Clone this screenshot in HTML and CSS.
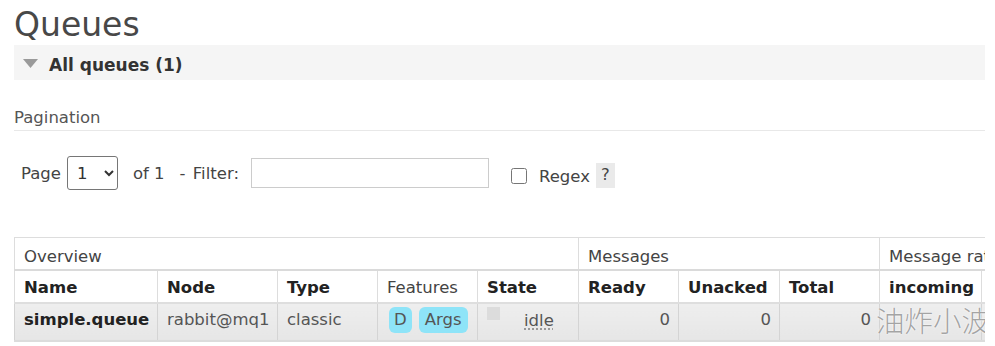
FILE: index.html
```html
<!DOCTYPE html>
<html lang="en">
<head>
    <meta charset="UTF-8">
    <title>Queues</title>
    <link rel="stylesheet" href="styles.css">
</head>
<body>
    <div class="page">
        <h1>Queues</h1>

        <div class="section-head">
            <svg class="toggle" width="15" height="9" viewBox="0 0 15 9"><polygon points="0,0 15,0 7.5,9" fill="#9a9a9a"/></svg><span>All queues (1)</span>
        </div>

        <h3 class="pagination-title">Pagination</h3>

        <div class="pager">
            <span class="lbl">Page</span>
            <select class="page-select">
                <option>1</option>
            </select>
            <span class="lbl of">of 1</span>
            <span class="lbl filter">- Filter:</span>
            <input type="text" class="filter-input">
            <input type="checkbox" class="regex-check" id="regex">
            <label class="lbl regex" for="regex">Regex</label>
            <span class="help">?</span>
        </div>

        <table class="queues">
            <colgroup>
                <col style="width:143px">
                <col style="width:120px">
                <col style="width:100px">
                <col style="width:100px">
                <col style="width:101px">
                <col style="width:100px">
                <col style="width:101px">
                <col style="width:100px">
                <col style="width:102px">
                <col style="width:110px">
            </colgroup>
            <thead>
                <tr class="groups">
                    <th colspan="5">Overview</th>
                    <th colspan="3">Messages</th>
                    <th colspan="2">Message rates</th>
                </tr>
                <tr class="cols">
                    <th>Name</th>
                    <th>Node</th>
                    <th>Type</th>
                    <th class="plain">Features</th>
                    <th>State</th>
                    <th>Ready</th>
                    <th>Unacked</th>
                    <th>Total</th>
                    <th>incoming</th>
                    <th></th>
                </tr>
            </thead>
            <tbody>
                <tr>
                    <td class="qname">simple.queue</td>
                    <td>rabbit@mq1</td>
                    <td>classic</td>
                    <td><span class="badge">D</span><span class="badge">Args</span></td>
                    <td><span class="state-dot"></span><abbr class="state" title="idle">idle</abbr></td>
                    <td class="num">0</td>
                    <td class="num">0</td>
                    <td class="num">0</td>
                    <td></td>
                    <td></td>
                </tr>
            </tbody>
        </table>

        <div class="watermark">油炸小波</div>
    </div>
</body>
</html>
```

FILE: styles.css
```css
body {
    margin: 0;
    background: #fff;
    font-family: "DejaVu Sans", Verdana, sans-serif;
    font-size: 16.5px;
    line-height: 20px;
    color: #444;
}

.page {
    position: relative;
    width: 971px;
    margin-left: 14px;
    overflow: hidden;
}

h1 {
    margin: 0;
    padding-top: 5px;
    font-size: 33px;
    line-height: 40px;
    font-weight: normal;
    color: #484848;
}

.section-head {
    height: 35px;
    box-sizing: border-box;
    padding: 10px 0 5px 9px;
    background: #f5f5f5;
    font-size: 17px;
    font-weight: bold;
    color: #333;
}

.section-head .toggle {
    vertical-align: 3px;
    margin-right: 11px;
}

.pagination-title {
    margin: 28px 0 0;
    padding-bottom: 2px;
    border-bottom: 1px solid #e8e8e8;
    font-size: 16.5px;
    font-weight: normal;
    color: #555;
}

.pager {
    display: flex;
    align-items: center;
    height: 34px;
    margin-top: 25px;
    padding-left: 7px;
}

.lbl {
    color: #444;
    margin-top: 2px;
}

.page-select {
    width: 51px;
    height: 34px;
    margin-left: 6px;
    font-family: "DejaVu Sans", Verdana, sans-serif;
    font-size: 16.5px;
    color: #333;
    border: 1px solid #767676;
    border-radius: 3px;
    background: #fff;
    padding-left: 5px;
}

.of {
    margin-left: 15px;
}

.filter {
    margin-left: 15px;
    word-spacing: 2px;
}

.filter-input {
    width: 238px;
    height: 30px;
    box-sizing: border-box;
    margin: 0 0 0 12px;
    border: 1px solid #ccc;
    border-radius: 0;
    font-size: 16.5px;
}

.regex-check {
    width: 16px;
    height: 16px;
    margin: 5px 0 0 22px;
}

.regex {
    margin-left: 12px;
    margin-top: 8px;
}

.help {
    margin-left: 6px;
    margin-top: 4px;
    padding: 2px 5px 3px;
    background: #eaeaea;
    color: #444;
}

.queues {
    margin-top: 47px;
    border-collapse: collapse;
    table-layout: fixed;
    width: 1077px;
    border-top: 1px solid #ddd;
    border-bottom: 2px solid #dcdcdc;
}

.queues th,
.queues td {
    text-align: left;
    vertical-align: top;
    white-space: nowrap;
    overflow: hidden;
    border-left: 1px solid #ddd;
}

.groups th {
    height: 31px;
    box-sizing: border-box;
    padding: 9px 9px 2px;
    font-weight: normal;
    color: #444;
    border-bottom: 2px solid #dadada;
}

.cols th {
    height: 31px;
    box-sizing: border-box;
    padding: 7px 9px 4px;
    font-weight: bold;
    color: #222;
    border-bottom: 2px solid #dedede;
}

.cols th.plain {
    font-weight: normal;
    color: #444;
}

.queues td {
    height: 35px;
    box-sizing: border-box;
    padding: 3px 9px 6px;
    line-height: 26px;
    color: #555;
    background: linear-gradient(#eeeeee, #e6e6e6);
    border-left-color: #d4d4d4;
}

.queues td.qname {
    font-weight: bold;
    color: #222;
}

.queues td.num {
    text-align: right;
    padding-right: 8px;
}

.badge {
    display: inline-block;
    line-height: 20px;
    padding: 3px 5px;
    margin-left: 2px;
    margin-right: 5px;
    border-radius: 6px;
    background: #8ee4f8;
    color: #555;
}

.badge + .badge {
    padding: 3px 6px;
}

.state-dot {
    display: inline-block;
    width: 13px;
    height: 13px;
    background: #dcdcdc;
    vertical-align: 6px;
}

.state {
    margin-left: 24px;
    text-decoration: underline dotted #888;
    text-underline-offset: 3px;
}

.watermark {
    position: absolute;
    left: 862px;
    top: 303px;
    white-space: nowrap;
    font-family: "Noto Sans CJK SC", sans-serif;
    font-size: 28.5px;
    line-height: 34px;
    font-weight: 300;
    color: #a4a4a4;
    text-shadow: 0 0 2px #fff, 0 0 1px #fff;
}
```
